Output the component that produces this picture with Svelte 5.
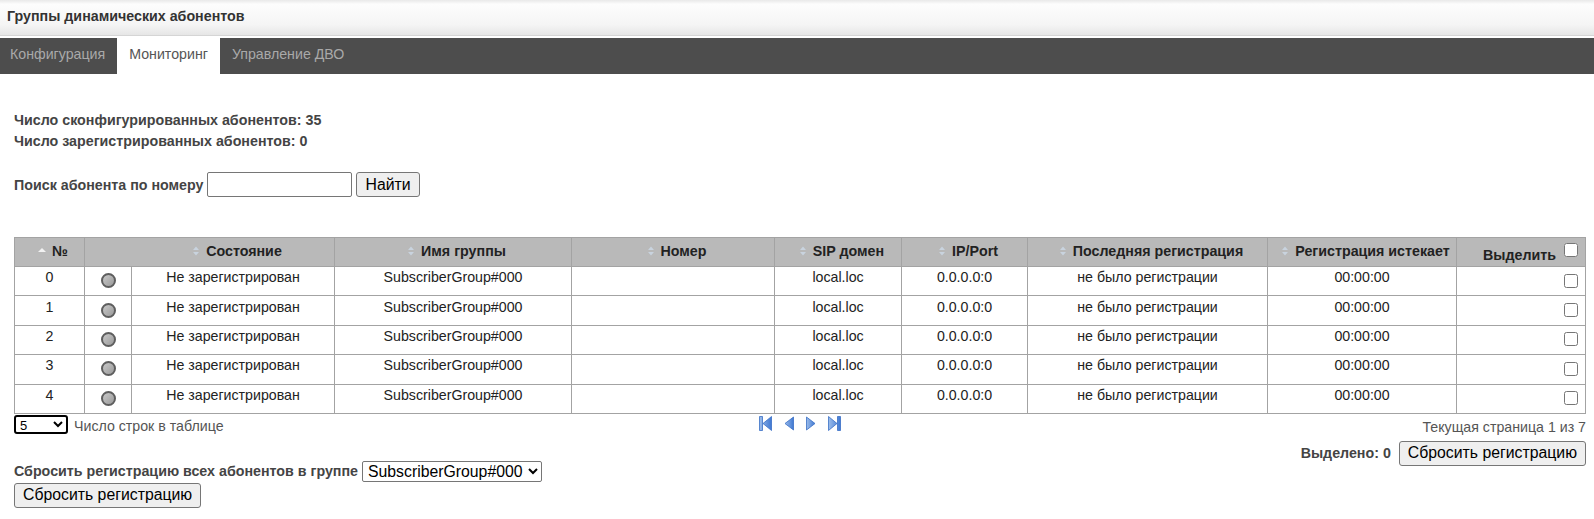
<script>
  const columns = [
    { label: 'Состояние', span: 2 },
    { label: 'Имя группы' },
    { label: 'Номер' },
    { label: 'SIP домен' },
    { label: 'IP/Port' },
    { label: 'Последняя регистрация' },
    { label: 'Регистрация истекает' }
  ];
  const rows = [0, 1, 2, 3, 4];
</script>

<div class="title">Группы динамических абонентов</div>
<nav class="tabs">
  <span class="tab">Конфигурация</span>
  <span class="tab active">Мониторинг</span>
  <span class="tab">Управление ДВО</span>
</nav>

<main class="content">
  <p class="stat first">Число сконфигурированных абонентов: 35</p>
  <p class="stat">Число зарегистрированных абонентов: 0</p>

  <div class="search">
    <b>Поиск абонента по номеру</b>
    <input type="text" class="search-input" />
    <button>Найти</button>
  </div>

  <table>
    <colgroup>
      <col style="width: 70px" />
      <col style="width: 47px" />
      <col style="width: 203px" />
      <col style="width: 237px" />
      <col style="width: 203px" />
      <col style="width: 127px" />
      <col style="width: 126px" />
      <col style="width: 240px" />
      <col style="width: 189px" />
      <col style="width: 129px" />
    </colgroup>
    <thead>
      <tr>
        <th>
          <svg class="sort" width="8" height="12" viewBox="0 0 8 12"><path d="M0 7 4 3 8 7Z" fill="#f2f2f2" /></svg>
          №
        </th>
        {#each columns as col}
          <th colspan={col.span ?? 1} class:wide={col.span}>
            <svg class="sort" width="8" height="12" viewBox="0 0 8 12">
              <path d="M1 5 4 1.500 7 5Z" fill="#c9d3de" />
              <path d="M1 7 4 10.500 7 7Z" fill="#c9d3de" />
            </svg>
            {col.label}
          </th>
        {/each}
        <th class="select-head"><span class="select-label">Выделить</span> <input type="checkbox" /></th>
      </tr>
    </thead>
    <tbody>
      {#each rows as n}
        <tr>
          <td>{n}</td>
          <td class="lamp-cell"><span class="lamp"></span></td>
          <td>Не зарегистрирован</td>
          <td>SubscriberGroup#000</td>
          <td></td>
          <td>local.loc</td>
          <td>0.0.0.0:0</td>
          <td>не было регистрации</td>
          <td>00:00:00</td>
          <td class="check-cell"><input type="checkbox" /></td>
        </tr>
      {/each}
    </tbody>
  </table>

  <div class="pager">
    <div class="pager-left">
      <select class="page-size"><option>5</option></select>
      <span class="rows-label">Число строк в таблице</span>
    </div>
    <div class="pager-nav">
      <svg width="13" height="15" viewBox="0 0 13 15"><path class="nav" d="M.5.500h3v14h-3zM12.500.500v14L4 7.500z" /></svg>
      <svg width="10" height="15" viewBox="0 0 10 15"><path class="nav" d="M9.500 1v13L1 7.500z" /></svg>
      <svg width="10" height="15" viewBox="0 0 10 15"><path class="nav" d="M.5 1v13L9 7.500z" /></svg>
      <svg width="13" height="15" viewBox="0 0 13 15"><path class="nav" d="M9.500.500h3v14h-3zM.5.500v14L9 7.500z" /></svg>
      <svg width="0" height="0" class="defs">
        <defs>
          <linearGradient id="navFill" x1="0" y1="0" x2="1" y2="0">
            <stop offset="0" stop-color="#9dbdea" />
            <stop offset="1" stop-color="#3f78d2" />
          </linearGradient>
        </defs>
      </svg>
    </div>
    <div class="pager-right">Текущая страница 1 из 7</div>
  </div>

  <div class="selected">
    <b>Выделено: 0</b>
    <button>Сбросить регистрацию</button>
  </div>

  <div class="reset">
    <b>Сбросить регистрацию всех абонентов в группе</b>
    <select class="group"><option>SubscriberGroup#000</option></select>
  </div>
  <button class="reset-btn">Сбросить регистрацию</button>
</main>

<style>
  :global(body) {
    margin: 0;
    background: #fff;
    font-family: "Liberation Sans", Arial, sans-serif;
    font-size: 14.200px;
    color: #333;
  }

  b {
    font-size: 14.250px;
  }

  .title {
    height: 35px;
    line-height: 33px;
    padding-left: 7px;
    font-size: 14.250px;
    font-weight: bold;
    background: linear-gradient(#e9e9e9, #fdfdfd 12%, #f5f5f5 70%, #e6e6e6);
    border-bottom: 1px solid #d5d5d5;
    margin-bottom: 2px;
  }

  .tabs {
    display: flex;
    height: 36px;
    background: #4d4d4d;
  }

  .tab {
    padding: 0 12px;
    line-height: 33px;
    color: #a9a9a9;
  }

  .tab:first-child {
    padding-left: 10px;
  }

  .tab.active {
    background: #fff;
    color: #555;
  }

  .content {
    padding: 0 8px 0 14px;
  }

  .stat {
    margin: 0;
    font-size: 14.250px;
    font-weight: bold;
    line-height: 21px;
    color: #444;
  }

  .stat.first {
    padding-top: 36px;
  }

  .search {
    display: flex;
    align-items: center;
    gap: 4px;
    margin-top: 20px;
    color: #444;
  }

  .search-input {
    width: 145px;
    height: 25px;
    box-sizing: border-box;
    border: 1px solid #767676;
    border-radius: 2px;
    padding: 1px 2px;
    margin: 0;
  }

  button {
    height: 25px;
    box-sizing: border-box;
    padding: 1px 8px;
    margin: 0;
    font: 15.800px "Liberation Sans", Arial, sans-serif;
    color: #000;
    background: #efefef;
    border: 1px solid #767676;
    border-radius: 3px;
  }

  table {
    margin-top: 40px;
    width: 1571px;
    table-layout: fixed;
    border-collapse: collapse;
    color: #222;
  }

  th {
    height: 29px;
    padding: 0 0 2px 7px;
    background: #b9b9b9;
    border: 1px solid #a3a3a3;
    font-size: 14.250px;
    font-weight: bold;
    color: #222;
    white-space: nowrap;
    box-sizing: border-box;
    line-height: 16px;
  }

  th.wide {
    padding-left: 55px;
  }

  .sort {
    vertical-align: -1px;
    margin-right: 2px;
  }

  .select-head {
    text-align: right;
    padding: 0 7px 0 0;
  }

  .select-label {
    position: relative;
    top: 3px;
  }

  th input[type="checkbox"] {
    position: relative;
    top: -3px;
    margin-left: 4px;
  }

  td {
    height: 29.400px;
    padding: 0 0 8px;
    border: 1px solid #a3a3a3;
    text-align: center;
    vertical-align: middle;
    box-sizing: border-box;
    line-height: 16px;
  }

  .lamp-cell {
    padding: 0 0 1px;
    line-height: 0;
  }

  .lamp {
    display: inline-block;
    width: 11px;
    height: 11px;
    border: 2px solid #5e5e5e;
    border-radius: 50%;
    background: linear-gradient(135deg, #c9c9c9, #9a9a9a);
    margin-left: 1px;
  }

  input[type="checkbox"] {
    width: 14px;
    height: 14px;
    margin: 0;
    vertical-align: middle;
  }

  .check-cell {
    text-align: right;
    padding: 0 7px 1px 0;
    line-height: 0;
  }

  .pager {
    display: grid;
    grid-template-columns: 1fr auto 1fr;
    align-items: start;
    height: 27px;
    color: #555;
  }

  .pager-left {
    display: flex;
    align-items: flex-start;
    gap: 6px;
    padding-top: 1px;
  }

  .rows-label {
    padding-top: 3px;
  }

  .page-size {
    width: 54px;
    height: 19px;
    box-sizing: border-box;
    padding: 0;
    font: 13px "Liberation Sans", Arial, sans-serif;
    border: 2px solid #000;
    border-radius: 3px;
    background: #fff;
    color: #000;
  }

  .pager-nav {
    display: flex;
    gap: 12px;
    padding-top: 2px;
  }

  .defs {
    position: absolute;
  }

  .nav {
    fill: url(#navFill);
    stroke: #3a6fc6;
    stroke-width: 1;
    stroke-opacity: 0.8;
  }

  .pager-right {
    text-align: right;
    padding: 5px 0 0;
  }

  .selected {
    display: flex;
    justify-content: flex-end;
    align-items: center;
    gap: 8px;
    color: #444;
  }

  .reset {
    display: flex;
    align-items: center;
    gap: 4px;
    color: #444;
    margin-top: -5px;
  }

  .group {
    width: 180px;
    height: 21px;
    font: 15.800px "Liberation Sans", Arial, sans-serif;
    background: #fff;
    color: #000;
    border: 1px solid #767676;
    border-radius: 2px;
    padding: 0 0 0 1px;
    margin: 0;
  }

  .reset-btn {
    display: block;
    margin-top: 1px;
  }
</style>
